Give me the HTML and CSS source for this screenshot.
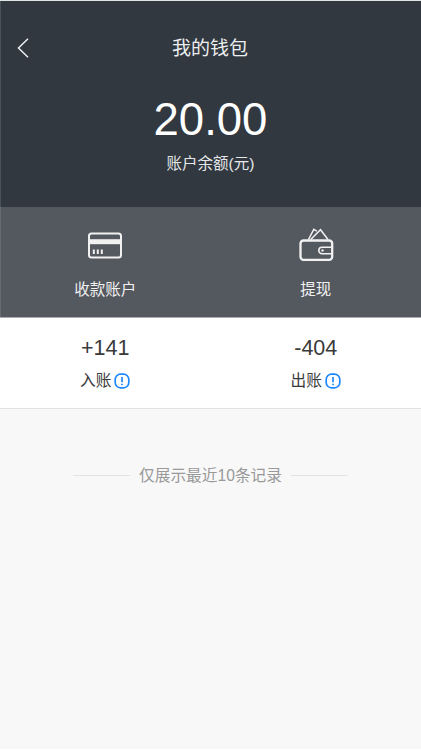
FILE: index.html
```html
<!DOCTYPE html>
<html lang="zh-CN">
<head>
<meta charset="utf-8">
<title>我的钱包</title>
<link rel="stylesheet" href="styles.css">
</head>
<body>
<main class="wallet">
  <header class="summary">
    <nav class="navbar">
      <svg class="back" viewBox="0 0 12 20" fill="none" stroke="currentColor" stroke-width="1.5"><path d="M11 .8 1.5 10 11 19.2"/></svg>
      <h1 class="title">我的钱包</h1>
    </nav>
    <div class="balance">20.00</div>
    <div class="balance-label">账户余额(元)</div>
  </header>
  <section class="actions">
    <div class="action">
      <svg class="icon" viewBox="0 0 36 36" fill="none" stroke="currentColor" stroke-width="2"><rect x="2" y="6.5" width="32" height="24" rx="2.5"/><path d="M2 14.7h32" stroke-width="5"/><path d="M6.8 22.5v4.4M10.8 22.5v4.4M14.8 22.5v4.4"/></svg>
      <span>收款账户</span>
    </div>
    <div class="action">
      <svg class="icon" viewBox="0 0 36 36" fill="none" stroke="currentColor" stroke-width="2.3"><rect x="2.5" y="13.5" width="31.7" height="19.3" rx="3"/><path d="M10.5 12.5 15.8 2.3l3 1.9M12.7 12.5 22.5 2.7 30 12.5" stroke-width="1.5"/><path d="M34 20.3H24a3.2 3.2 0 0 0 0 6.4h10" stroke-width="1.6"/><circle cx="24.5" cy="23.5" r="1.2" fill="currentColor" stroke="none"/></svg>
      <span>提现</span>
    </div>
  </section>
  <section class="totals">
    <div class="total">
      <div class="amount">+141</div>
      <div class="total-label">入账<svg class="info" viewBox="0 0 16 16" fill="none" stroke="currentColor" stroke-width="1.7"><rect x="1.2" y="1.2" width="13.6" height="13.6" rx="5.3"/><path d="M8 4v5.3M8 10.7v1.5"/></svg></div>
    </div>
    <div class="total">
      <div class="amount">-404</div>
      <div class="total-label">出账<svg class="info" viewBox="0 0 16 16" fill="none" stroke="currentColor" stroke-width="1.7"><rect x="1.2" y="1.2" width="13.6" height="13.6" rx="5.3"/><path d="M8 4v5.3M8 10.7v1.5"/></svg></div>
    </div>
  </section>
  <p class="notice">仅展示最近10条记录</p>
</main>
</body>
</html>
```
FILE: styles.css
```css
* { box-sizing: border-box; }
body {
  margin: 0;
  background: #f8f8f8;
  font-family: "Liberation Sans", "Noto Sans CJK SC", sans-serif;
  color: #3a3a3a;
}
svg { display: block; flex: none; }
.wallet {
  height: 750px;
  overflow: hidden;
  border-top: 1px solid #dfe4e4;
  border-bottom: 1px solid #fff;
}
.summary {
  height: 206px;
  background: #313840;
  box-shadow: inset 1px 0 #49535a;
  color: #fff;
  text-align: center;
}
.navbar {
  display: grid;
  grid-template-columns: 40px 1fr 41px;
  align-items: center;
  height: 64px;
  padding-top: 30px;
  color: #eceeef;
}
.back { width: 12px; height: 20px; margin-left: 17px; }
.title { margin: 0; padding-top: 2px; font-size: 19px; line-height: 28px; font-weight: 400; }
.balance {
  margin-top: 29px;
  font-size: 45.5px;
  line-height: 52px;
}
.balance-label {
  margin-top: 6px;
  font-size: 15.5px;
  line-height: 24px;
  color: #e5e7e8;
}
.actions {
  display: flex;
  height: 111px;
  background: #54585f;
  box-shadow: inset 1px 0 #686c72;
  border-bottom: 1px solid #aaacaf;
}
.action {
  flex: 1;
  display: flex;
  flex-direction: column;
  align-items: center;
  padding-top: 20px;
  gap: 15px;
  font-size: 15.5px;
  line-height: 24px;
  color: #f1f1f2;
}
.icon { width: 36px; height: 36px; }
.totals {
  display: flex;
  height: 91px;
  background: #fff;
  border-bottom: 1px solid #e2e2e2;
}
.total {
  flex: 1;
  display: flex;
  flex-direction: column;
  align-items: center;
  padding-top: 17px;
}
.amount { font-size: 21.5px; line-height: 26px; }
.total-label {
  display: flex;
  align-items: center;
  gap: 3px;
  margin-top: 8px;
  font-size: 15.7px;
  line-height: 24px;
}
.info { width: 16px; height: 16px; color: #1e88ff; }
.notice {
  display: flex;
  align-items: center;
  justify-content: center;
  gap: 9px;
  margin: 55px 0 0;
  font-size: 15.7px;
  line-height: 24px;
  color: #999;
}
.notice::before,
.notice::after {
  content: "";
  width: 57px;
  height: 1px;
  margin-bottom: 2px;
  background: #e3e3e3;
}
```
